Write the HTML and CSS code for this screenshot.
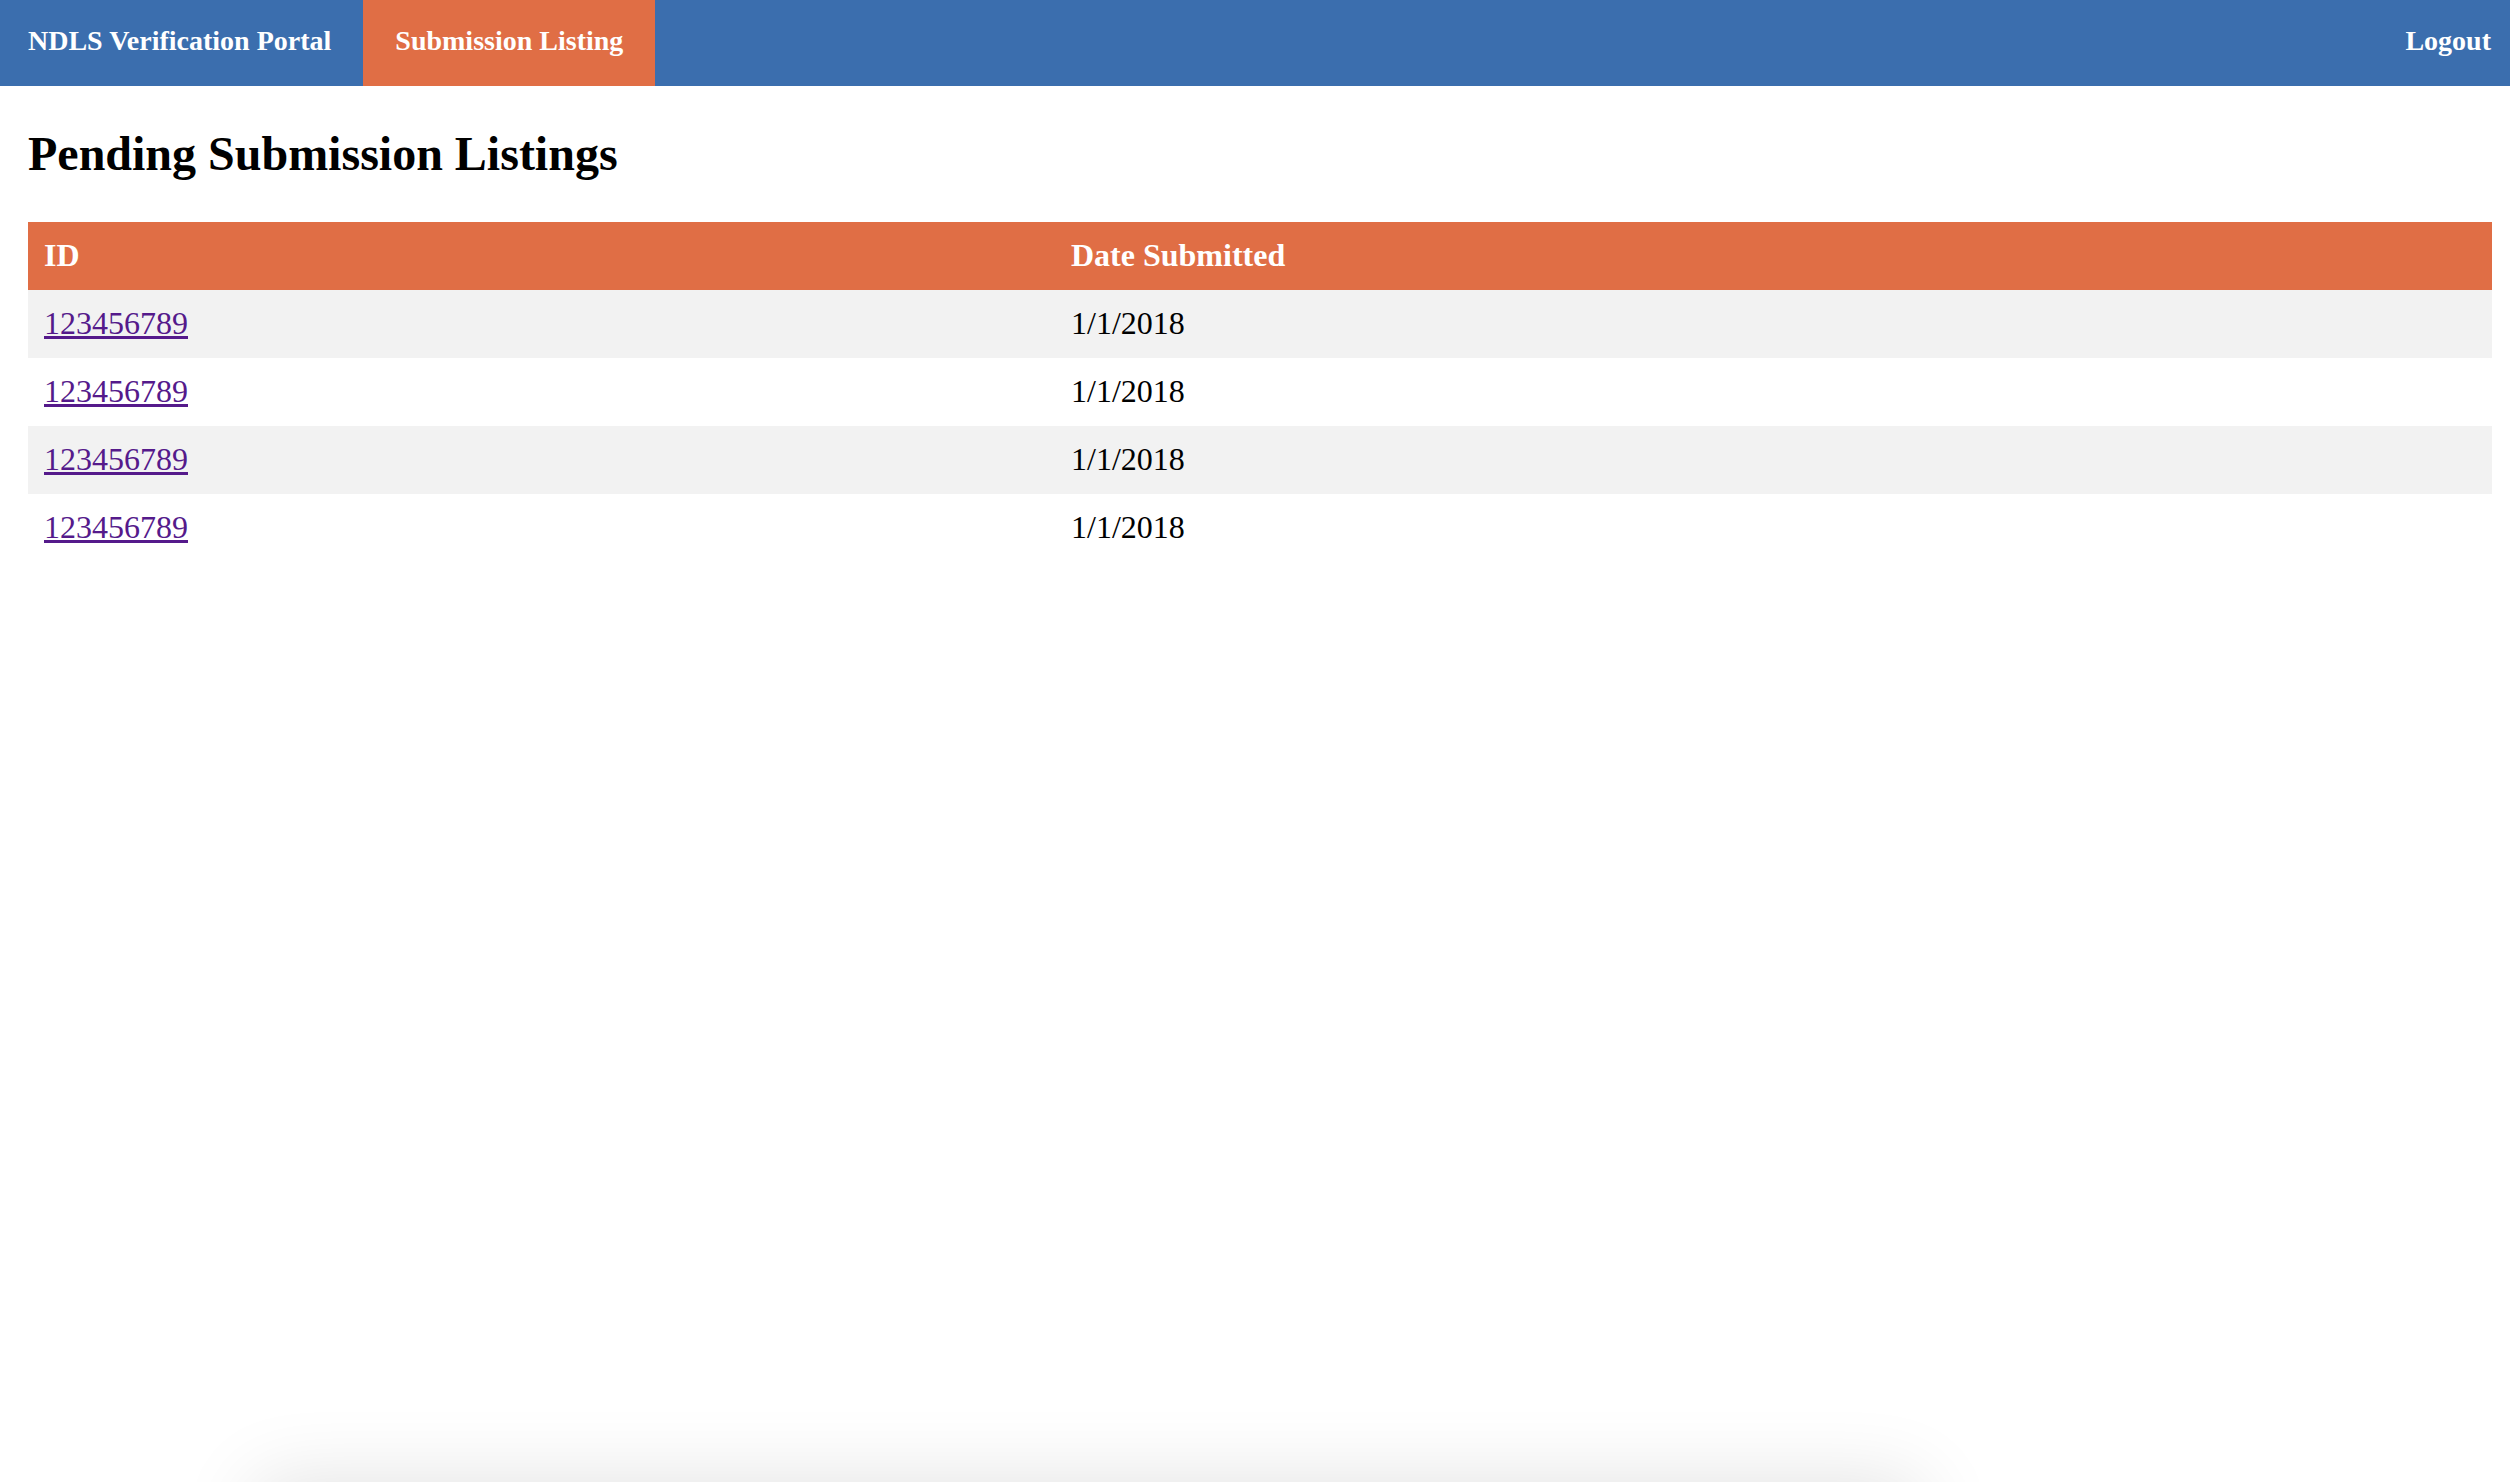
FILE: index.html
```html
<!DOCTYPE html>
<html lang="en">
<head>
<meta charset="utf-8">
<title>NDLS Verification Portal</title>
<link rel="stylesheet" href="styles.css">
</head>
<body>
<nav class="topnav">
  <a class="nav-item brand" href="#">NDLS Verification Portal</a>
  <a class="nav-item active" href="#">Submission Listing</a>
  <span class="nav-spacer"></span>
  <a class="nav-item logout" href="#">Logout</a>
</nav>
<main class="content">
  <h1 class="page-title">Pending Submission Listings</h1>
  <table class="listing">
    <thead>
      <tr><th class="col-id">ID</th><th class="col-date">Date Submitted</th></tr>
    </thead>
    <tbody>
      <tr><td><a class="sub-link" href="#">123456789</a></td><td>1/1/2018</td></tr>
      <tr><td><a class="sub-link" href="#">123456789</a></td><td>1/1/2018</td></tr>
      <tr><td><a class="sub-link" href="#">123456789</a></td><td>1/1/2018</td></tr>
      <tr><td><a class="sub-link" href="#">123456789</a></td><td>1/1/2018</td></tr>
    </tbody>
  </table>
</main>
<div class="offscreen-panel"></div>
</body>
</html>
```
FILE: styles.css
```css
html, body {
  margin: 0;
  padding: 0;
  background: #ffffff;
}
body {
  font-family: "Liberation Serif", "Times New Roman", serif;
  color: #000;
}
.topnav {
  display: flex;
  align-items: stretch;
  height: 86px;
  background: #3b6eae;
}
.nav-item {
  display: flex;
  align-items: center;
  font-size: 28px;
  font-weight: bold;
  color: #ffffff;
  text-decoration: none;
  padding: 0 32px 4px;
}
.brand {
  padding-left: 28px;
}
.active {
  background: #e06e45;
}
.nav-spacer {
  flex: 1;
}
.logout {
  padding-right: 19px;
}
.content {
  padding: 0 18px 0 28px;
}
.page-title {
  font-size: 48px;
  line-height: 56px;
  font-weight: bold;
  margin: 40px 0;
}
.listing {
  width: 100%;
  border-collapse: collapse;
  font-size: 32px;
}
.listing th, .listing td {
  text-align: left;
  padding: 15px 16px 17px;
  line-height: 36px;
}
.listing th {
  background: #e06e45;
  color: #ffffff;
  font-weight: bold;
}
.col-id {
  width: 995px;
}
.listing tbody tr:nth-child(odd) {
  background: #f2f2f2;
}
.sub-link {
  color: #551a8b;
  text-decoration: underline;
}
.offscreen-panel {
  position: fixed;
  top: 100%;
  left: 256px;
  width: 1664px;
  height: 200px;
  background: #fff;
  box-shadow: 0 0 80px rgba(0, 0, 0, 0.12);
}
```
